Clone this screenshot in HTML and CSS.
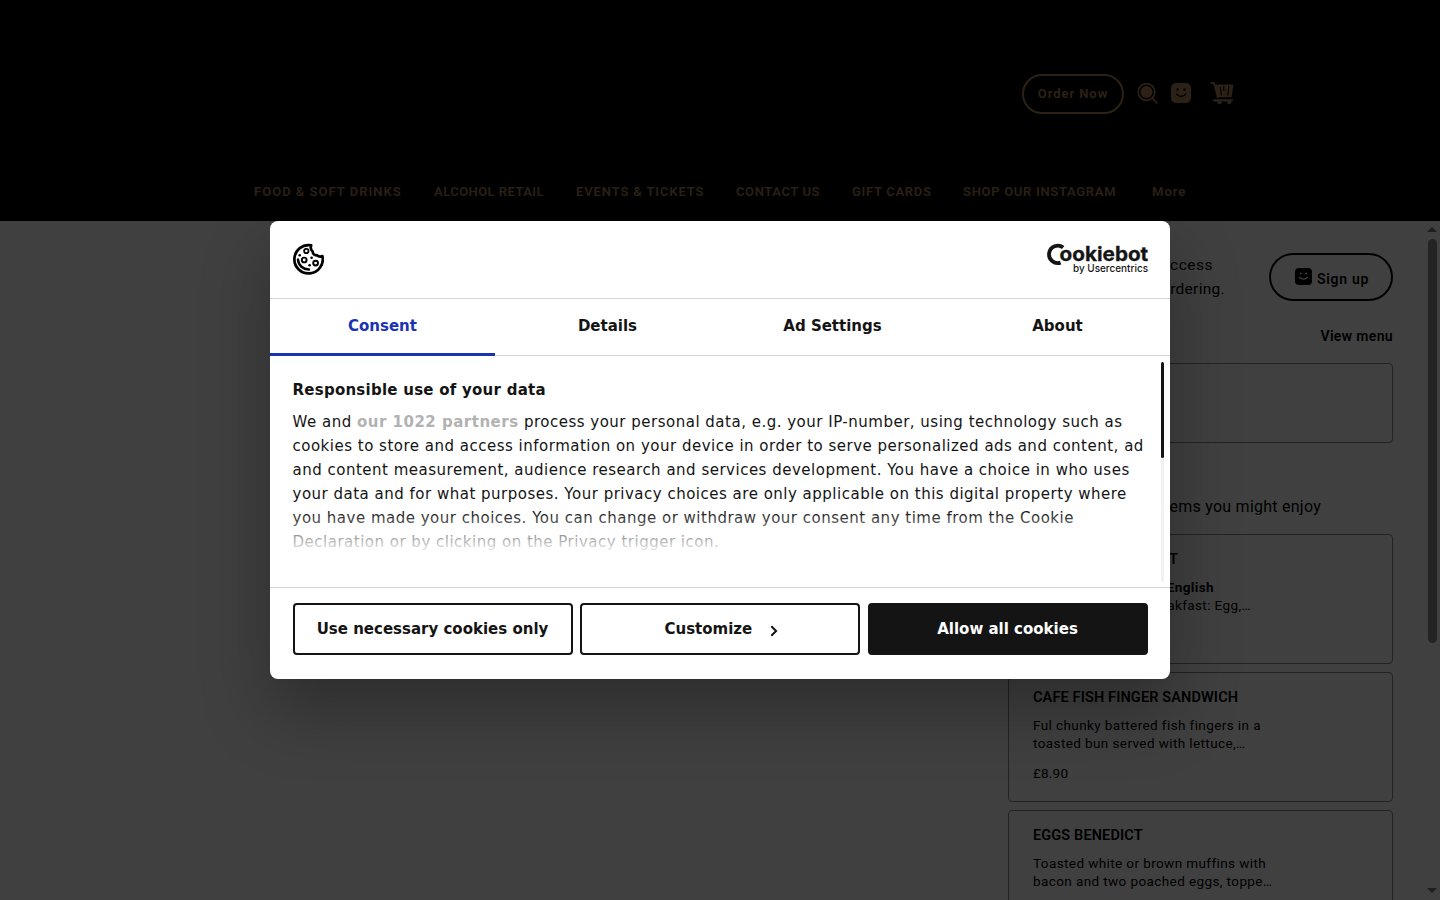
FILE: index.html
```html
<!DOCTYPE html>
<html lang="en">
<head>
    <meta charset="UTF-8">
    <meta name="viewport" content="width=device-width, initial-scale=1.0">
    <title>Cafe</title>
    <link rel="stylesheet" href="styles.css">
</head>
<body>
    <header class="site-header">
        <div class="header-tools">
            <a class="order-btn">Order Now</a>
            <svg class="icon-search" width="22" height="22" viewBox="0 0 22 22">
                <circle cx="9.5" cy="9" r="8.4" fill="none" stroke="currentColor" stroke-width="1.6"/>
                <circle cx="9.5" cy="9" r="6" fill="currentColor"/>
                <path d="M15 14.5L20 20.5" stroke="currentColor" stroke-width="1.9"/>
            </svg>
            <svg class="icon-face" width="20" height="20" viewBox="0 0 20 20">
                <rect width="20" height="20" rx="5" fill="currentColor"/>
                <circle cx="6.5" cy="6.5" r="1.2"/>
                <circle cx="13.5" cy="6.5" r="1.2"/>
                <path d="M5 10.8q5 5.5 10 0" fill="none" stroke="#000" stroke-width="1.5"/>
            </svg>
            <svg class="icon-cart" width="23" height="23" viewBox="0 0 23 23">
                <path d="M0 1h3l4 15" fill="none" stroke="currentColor" stroke-width="1.8"/>
                <path d="M4 2.5h18.5l-2 12.8H6.8z" fill="currentColor"/>
                <path d="M9 5l1.6 8.5M12.8 4v5M17.8 4l-1 9.5" stroke="#000" stroke-width="1.2"/>
                <path d="M3 18.3h18" stroke="currentColor" stroke-width="2.2" stroke-linecap="round"/>
                <circle cx="8.5" cy="20.3" r="2" fill="currentColor"/>
                <circle cx="18.3" cy="20.3" r="2" fill="currentColor"/>
            </svg>
        </div>
        <nav class="main-nav">
            <a class="nav-food">FOOD &amp; SOFT DRINKS</a>
            <a class="nav-alcohol">ALCOHOL RETAIL</a>
            <a class="nav-events">EVENTS &amp; TICKETS</a>
            <a class="nav-contact">CONTACT US</a>
            <a class="nav-gift">GIFT CARDS</a>
            <a class="nav-insta">SHOP OUR INSTAGRAM</a>
            <a class="nav-more">More</a>
        </nav>
    </header>

    <main class="page">
        <aside class="order-panel">
            <div class="member-row">
                <p class="member-text"><span class="line-one">access</span><span>ordering.</span></p>
                <a class="signup-btn">
                    <svg width="17" height="17" viewBox="0 0 17 17">
                        <rect width="17" height="17" rx="4" fill="#000"/>
                        <circle cx="5.8" cy="5.5" r="1" fill="#fff"/>
                        <circle cx="11.2" cy="5.5" r="1" fill="#fff"/>
                        <path d="M4.2 9q4.3 4.4 8.6 0" fill="none" stroke="#fff" stroke-width="1.3"/>
                    </svg>
                    <span>Sign up</span>
                </a>
            </div>
            <a class="view-menu">View menu</a>
            <div class="basket-card"></div>
            <p class="enjoy">items you might enjoy</p>

            <div class="item-card first-item">
                <h3>BREAKFAST</h3>
                <p><b>English</b><br>Breakfast: Egg,…</p>
            </div>
            <div class="item-card">
                <h3>CAFE FISH FINGER SANDWICH</h3>
                <p>Ful chunky battered fish fingers in a<br>toasted bun served with lettuce,…</p>
                <span class="price">£8.90</span>
            </div>
            <div class="item-card">
                <h3>EGGS BENEDICT</h3>
                <p>Toasted white or brown muffins with<br>bacon and two poached eggs, toppe…</p>
            </div>
        </aside>
        <div class="scrollbar">
            <i class="arrow-up"></i>
            <i class="thumb"></i>
            <i class="arrow-down"></i>
        </div>
    </main>

    <div class="underlay"></div>

    <!-- Cookie consent dialog -->
    <div class="dialog" role="dialog">
        <div class="dialog-header">
            <svg class="cookie" width="32" height="32" viewBox="0 0 32 32" fill="none" stroke="#000">
                <path d="M19.2 2.3A14.2 14.2 0 1 0 30.4 13C28.4 13.9 26.3 13.4 25 12.2C22.8 12.6 20.7 11.2 20.8 8.7C18.9 7.1 18.3 4.6 19.2 2.3Z" stroke-width="2.7" stroke-linejoin="round"/>
                <circle cx="14.3" cy="8" r="2.2" stroke-width="1.8"/>
                <circle cx="12.2" cy="17" r="2.4" stroke-width="1.9"/>
                <circle cx="23.6" cy="20.1" r="2.4" stroke-width="1.9"/>
                <path d="M6 16.6C6.5 22.5 11 26.4 16.9 26.6" stroke-width="2.5" stroke-linecap="round"/>
                <g fill="#000" stroke="none">
                    <circle cx="7.7" cy="12.3" r="1.3"/>
                    <circle cx="19.6" cy="14.7" r="1.3"/>
                    <circle cx="17.6" cy="22.3" r="1.3"/>
                </g>
            </svg>
            <svg class="logo" width="104" height="34" viewBox="0 0 104 34">
                <path d="M17.2 4.6A8.7 8.7 0 1 0 14.6 19.6" fill="none" stroke="#141414" stroke-width="3.8"/>
                <text x="13.6" y="18" class="logo-name" textLength="88.6" lengthAdjust="spacingAndGlyphs">ookiebot</text>
                <text x="27" y="29" class="logo-by" textLength="75" lengthAdjust="spacingAndGlyphs">by Usercentrics</text>
            </svg>
        </div>
        <div class="tabs">
            <a class="tab active">Consent</a>
            <a class="tab">Details</a>
            <a class="tab">Ad Settings</a>
            <a class="tab">About</a>
        </div>
        <div class="dialog-body">
            <div class="consent-text">
                <h2>Responsible use of your data</h2>
                <p>We and <b>our 1022 partners</b> process your personal data, e.g. your IP-number, using technology such as<br>cookies to store and access information on your device in order to serve personalized ads and content, ad<br>and content measurement, audience research and services development. You have a choice in who uses<br>your data and for what purposes. Your privacy choices are only applicable on this digital property where<br>you have made your choices. You can change or withdraw your consent any time from the Cookie<br>Declaration or by clicking on the Privacy trigger icon.</p>
            </div>
            <div class="body-scroll"><i></i></div>
            <div class="fade"></div>
        </div>
        <div class="dialog-footer">
            <button>Use necessary cookies only</button>
            <button class="customize">Customize
                <svg width="8" height="12" viewBox="0 0 8 12"><path d="M1.3 1.2L6.1 6L1.3 10.8" fill="none" stroke="#141414" stroke-width="2"/></svg>
            </button>
            <button class="allow">Allow all cookies</button>
        </div>
    </div>
</body>
</html>
```
FILE: styles.css
```css
* {
    box-sizing: border-box;
}
body {
    margin: 0;
    height: 900px;
    overflow: hidden;
    background-color: #fff;
    font-family: "Roboto", sans-serif;
    color: #000;
}
h2, h3, p {
    margin: 0;
}
a {
    white-space: nowrap;
}

/* Site header */
.site-header {
    height: 221px;
    padding-top: 74px;
    background-color: #000;
    color: #ac8458;
    font-size: 13px;
    font-weight: 600;
}
.header-tools {
    display: flex;
    height: 40px;
    margin-left: 1022px;
}
.order-btn {
    width: 102px;
    height: 40px;
    border: 2px solid #ac8458;
    border-radius: 20px;
    line-height: 36px;
    text-align: center;
    letter-spacing: 0.95px;
}
.icon-search {
    margin: 9px 0 0 13px;
}
.icon-face {
    margin: 9px 0 0 12px;
}
.icon-cart {
    margin: 8px 0 0 20px;
}
.main-nav {
    display: flex;
    margin: 70px 0 0 254px;
    line-height: 16px;
    letter-spacing: 0.7px;
}
.nav-food {
    width: 180px;
    letter-spacing: 1.02px;
}
.nav-alcohol {
    width: 142px;
    letter-spacing: 0.45px;
}
.nav-events {
    width: 160px;
    letter-spacing: 0.88px;
}
.nav-contact {
    width: 116px;
    letter-spacing: 0.6px;
}
.nav-gift {
    width: 111px;
}
.nav-insta {
    width: 189px;
}
.nav-more {
    letter-spacing: 1px;
}

/* Ordering panel */
.page {
    display: flex;
    justify-content: flex-end;
    height: 679px;
}
.order-panel {
    width: 385px;
    margin-right: 31px;
    padding-top: 32px;
}
.member-row {
    display: flex;
    justify-content: flex-end;
    height: 48px;
}
.member-text {
    display: flex;
    flex-direction: column;
    align-items: flex-end;
    margin-right: 44px;
    font-size: 15.5px;
    line-height: 24px;
    letter-spacing: 0.3px;
}
.line-one {
    margin-right: 12px;
    letter-spacing: 0.5px;
}
.signup-btn {
    display: flex;
    width: 124px;
    height: 48px;
    padding: 13px 0 0 24px;
    gap: 5px;
    border: 2px solid #000;
    border-radius: 24px;
    font-size: 14px;
    font-weight: 600;
    line-height: 23px;
    letter-spacing: 0.7px;
}
.view-menu {
    display: block;
    height: 20px;
    margin: 26px 0 16px;
    text-align: right;
    font-size: 14px;
    font-weight: 600;
    line-height: 19px;
    letter-spacing: 0.35px;
}
.basket-card {
    height: 80px;
    border: 1px solid #8c8c8c;
    border-radius: 4px;
}
.enjoy {
    height: 91px;
    padding: 52px 72px 0 0;
    text-align: right;
    font-size: 16px;
    line-height: 24px;
    letter-spacing: 0.25px;
}
.item-card {
    height: 130px;
    margin-bottom: 8px;
    padding: 15px 24px;
    border: 1px solid #8c8c8c;
    border-radius: 4px;
}
.item-card h3 {
    font-size: 14.5px;
    font-weight: 600;
    line-height: 20px;
    letter-spacing: 0.13px;
}
.item-card p {
    margin-top: 8px;
    font-size: 13.5px;
    line-height: 18px;
    letter-spacing: 0.4px;
}
.price {
    display: block;
    margin-top: 12px;
    font-size: 13.5px;
    line-height: 18px;
    letter-spacing: 0.2px;
}
.first-item {
    padding-right: 141px;
    text-align: right;
}
.first-item h3 {
    padding-right: 73px;
}
.first-item b {
    margin-right: 37px;
}

.scrollbar {
    display: flex;
    flex-direction: column;
    align-items: center;
    width: 16px;
    padding: 6px 0 7px;
}
.arrow-up, .arrow-down {
    border: 5px solid transparent;
    border-top: 0;
    border-bottom: 5px solid #7c7c7c;
}
.arrow-down {
    margin-top: auto;
    border-bottom: 0;
    border-top: 5px solid #7c7c7c;
}
.thumb {
    width: 9px;
    height: 404px;
    margin-top: 7px;
    border-radius: 5px;
    background-color: #8c8c8c;
}

.underlay {
    position: absolute;
    inset: 0;
    background-color: rgba(0, 0, 0, 0.75);
}

/* Dialog */
.dialog {
    position: absolute;
    top: 221px;
    left: 270px;
    width: 900px;
    height: 458px;
    background-color: #fff;
    border-radius: 8px;
    box-shadow: 0 32px 68px rgba(0, 0, 0, 0.3);
    color: #141414;
    font-family: "DejaVu Sans", sans-serif;
    font-size: 15px;
}
.dialog-header {
    display: flex;
    justify-content: space-between;
    height: 78px;
    padding: 22px 20px 0 22px;
    border-bottom: 1px solid #d6d6d6;
}
.logo {
    overflow: visible;
}
.logo-name {
    font: 700 20px "Inter", sans-serif;
    fill: #141414;
    stroke: #141414;
    stroke-width: 0.3px;
}
.logo-by {
    font: 500 10.5px "Inter", sans-serif;
    fill: #141414;
}
.tabs {
    display: flex;
    height: 57px;
    border-bottom: 1px solid #d6d6d6;
}
.tab {
    width: 225px;
    height: 57px;
    text-align: center;
    font-weight: bold;
    line-height: 54px;
}
.tab.active {
    color: #1a32b4;
    border-bottom: 3px solid #1a32b4;
}
.dialog-body {
    position: relative;
    display: flex;
    justify-content: space-between;
    height: 231px;
    padding: 6px 6px 0 22.5px;
}
.consent-text {
    padding-top: 16px;
    line-height: 24px;
    letter-spacing: 0.5px;
    white-space: nowrap;
}
.consent-text h2 {
    height: 32px;
    font-size: 15px;
    letter-spacing: 0.25px;
}
.consent-text b {
    color: #b2b2b2;
}
.body-scroll {
    width: 3px;
    height: 220px;
    border-radius: 2px;
    background-color: #f1f1f1;
}
.body-scroll i {
    display: block;
    height: 96px;
    border-radius: 2px;
    background-color: #141414;
}
.fade {
    position: absolute;
    left: 0;
    bottom: 32px;
    width: 880px;
    height: 44px;
    background: linear-gradient(to bottom, rgba(255, 255, 255, 0), #fff);
}
.dialog-footer {
    display: flex;
    gap: 7.5px;
    height: 92px;
    padding: 15px 22px 0 22.5px;
    border-top: 1px solid #d6d6d6;
}
.dialog-footer button {
    width: 280px;
    height: 52px;
    padding: 0;
    border: 2px solid #141414;
    border-radius: 4px;
    background-color: #fff;
    color: #141414;
    font: bold 15px "DejaVu Sans", sans-serif;
}
.dialog-footer .customize {
    padding-left: 2px;
}
.dialog-footer .customize svg {
    margin: 0 0 -3px 12px;
}
.dialog-footer .allow {
    background-color: #141414;
    color: #fff;
}
```
